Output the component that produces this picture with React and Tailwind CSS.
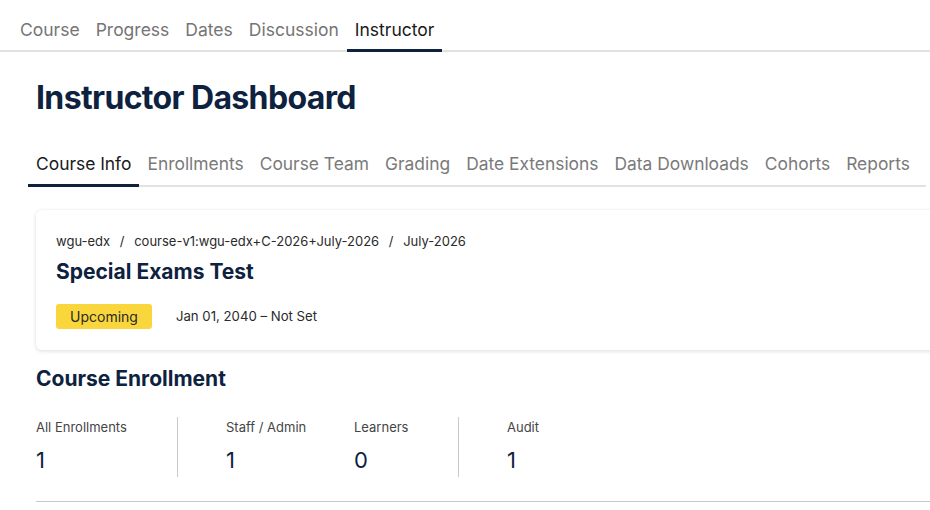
import React from 'react';

const topTabs = ['Course', 'Progress', 'Dates', 'Discussion', 'Instructor'];
const subTabs = ['Course Info', 'Enrollments', 'Course Team', 'Grading', 'Date Extensions', 'Data Downloads', 'Cohorts', 'Reports'];

const Stat = ({ label, value, className }) => (
  <div className={`flex flex-col ${className}`}>
    <span className="text-[13px] leading-none text-[#454545]">{label}</span>
    <span className="mt-[15px] text-[22px] leading-none text-[#0e2240]">{value}</span>
  </div>
);

export default function App() {
  return (
    <div className="w-full h-[510px] overflow-hidden bg-white font-['Inter','Liberation_Sans',sans-serif]">
      <nav className="flex pl-3 h-[52px] border-b-2 border-[#e4e1de]">
        {topTabs.map((t) => (
          <div
            key={t}
            className={`px-2 pt-[18px] text-[17.5px] leading-[24px] -mb-[2px] border-b-[3px] ${t === 'Instructor' ? 'border-[#0e2240] text-[#1a1a1a]' : 'border-transparent text-[#757575]'}`}
          >
            {t}
          </div>
        ))}
      </nav>

      <main className="w-[1000px] pl-[36px]">
        <h1 className="mt-[28px] text-[32px] leading-[36px] font-bold tracking-[-0.02em] text-[#0e2240]">Instructor Dashboard</h1>

        <div className="-ml-2 mt-[36px] inline-flex pr-2 border-b-2 border-[#e4e1de]">
          {subTabs.map((t) => (
            <div
              key={t}
              className={`px-2 pb-[8px] text-[17.4px] leading-[24px] -mb-[2px] border-b-[3px] ${t === 'Course Info' ? 'border-[#0e2240] text-[#1a1a1a]' : 'border-transparent text-[#7a7a7a]'}`}
            >
              {t}
            </div>
          ))}
        </div>

        <section className="mt-[23px] rounded-md bg-white px-5 pt-[23px] pb-[21px] shadow-[0_1px_4px_rgba(0,0,0,0.14)]">
          <p className="text-[13px] leading-[16px] text-[#2a2a2a]">
            wgu-edx <span className="mx-[6px]">/</span> course-v1:wgu-edx+C-2026+July-2026 <span className="mx-[6px]">/</span> July-2026
          </p>
          <h2 className="mt-[9px] text-[21px] leading-[28px] font-bold text-[#0e2240]">Special Exams Test</h2>
          <div className="mt-[18px] flex items-center gap-6">
            <span className="rounded-[3px] bg-[#f9d63c] px-[14px] py-[4px] text-[14px] leading-[17px] text-[#2a2a2a]">Upcoming</span>
            <span className="text-[13.2px] text-[#2a2a2a]">Jan 01, 2040 – Not Set</span>
          </div>
        </section>

        <h2 className="mt-[16px] text-[21px] leading-[26px] font-bold text-[#0e2240]">Course Enrollment</h2>

        <div className="mt-[22px] flex items-start border-b border-[#c9c9c9] pb-[24px]">
          <div className="flex w-[141px] pt-[7px]">
            <Stat label="All Enrollments" value="1" />
          </div>
          <div className="mt-[3px] w-px h-[60px] bg-[#c9c9c9]" />
          <div className="flex pl-[48px] pt-[7px]">
            <Stat label="Staff / Admin" value="1" className="w-[128px]" />
            <Stat label="Learners" value="0" className="w-[104px]" />
          </div>
          <div className="mt-[3px] w-px h-[60px] bg-[#c9c9c9]" />
          <div className="flex pl-[48px] pt-[7px]">
            <Stat label="Audit" value="1" />
          </div>
        </div>
      </main>
    </div>
  );
}
